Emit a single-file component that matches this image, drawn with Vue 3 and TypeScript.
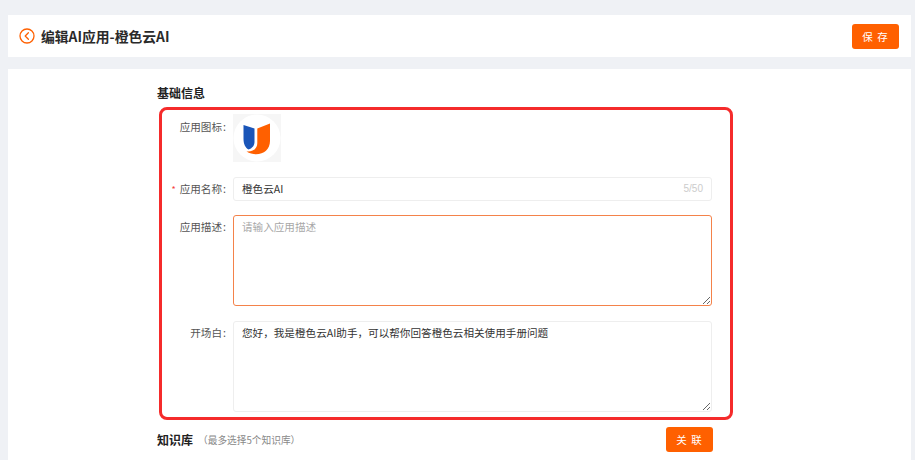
<script setup lang="ts">
const intro = '您好，我是橙色云AI助手，可以帮你回答橙色云相关使用手册问题'
</script>

<template>
  <div class="page">
    <header class="header">
      <div class="head-left">
        <svg class="back" width="16" height="16" viewBox="0 0 16 16" fill="none">
          <circle cx="8" cy="8" r="7" stroke="#ff6000" stroke-width="1.3" />
          <path d="M9.4 4.8 6.2 8l3.2 3.2" stroke="#ff6000" stroke-width="1.3" stroke-linecap="round" stroke-linejoin="round" />
        </svg>
        <h1 class="title">编辑AI应用-橙色云AI</h1>
      </div>
      <button class="btn" type="button">保 存</button>
    </header>

    <main class="content">
      <h2 class="section">基础信息</h2>
      <div class="form">
        <div class="row row-icon">
          <label class="label">应用图标<span class="colon">:</span></label>
          <div class="app-icon">
            <svg width="48" height="48" viewBox="0 0 48 48">
              <circle cx="24" cy="24" r="23.5" fill="#fff" />
              <path d="M10.500 11 21.500 14.500V28C21.500 31.500 19 34.500 15.500 35.500 12 33.500 10.500 29.500 10.500 25Z" fill="#1a55b8" />
              <path d="M24.300 14.500 37 9.500V27C37 35 31 40.300 23 40.300 19.800 40.300 16.500 39.300 13.500 37.500 19.500 38 24.300 35 24.300 29Z" fill="#ff6000" />
            </svg>
          </div>
        </div>

        <div class="row row-name">
          <label class="label"><span class="req">*</span>应用名称<span class="colon">:</span></label>
          <div class="field input">
            <span>橙色云AI</span>
            <span class="count">5/50</span>
          </div>
        </div>

        <div class="row row-desc">
          <label class="label">应用描述<span class="colon">:</span></label>
          <textarea class="field area area-focus" placeholder="请输入应用描述"></textarea>
        </div>

        <div class="row">
          <label class="label">开场白<span class="colon">:</span></label>
          <textarea class="field area" :value="intro"></textarea>
        </div>
      </div>

      <div class="kb">
        <div class="kb-text">
          <h2 class="section">知识库</h2>
          <span class="note">（最多选择5个知识库）</span>
        </div>
        <button class="btn" type="button">关 联</button>
      </div>

      <div class="highlight"></div>
    </main>
  </div>
</template>

<style>
html, body {
  margin: 0;
  background: #eff1f5;
}
</style>

<style scoped>
.page {
  width: 915px;
  height: 460px;
  overflow: hidden;
  box-sizing: border-box;
  padding: 15px 4px 0 8px;
  background: #eff1f5;
  font-family: "Noto Sans CJK SC", "Liberation Sans", sans-serif;
  color: #222;
}
.header {
  height: 42px;
  display: flex;
  align-items: center;
  justify-content: space-between;
  background: #fff;
  padding: 0 12px 0 11px;
}
.head-left {
  display: flex;
  align-items: center;
  gap: 6px;
}
.back { display: block; margin-top: -1px; }
.title {
  margin: 0;
  font-size: 13.8px;
  font-weight: 600;
  color: #2a2a2a;
  font-family: "Noto Sans CJK SC", sans-serif;
  line-height: 20px;
}
.btn {
  width: 47px;
  height: 25px;
  padding: 0;
  border: 0;
  border-radius: 3px;
  background: #ff6000;
  color: #fff;
  font: 400 10.5px "Noto Sans CJK SC", sans-serif;
  letter-spacing: 1px;
}
.content {
  position: relative;
  margin-top: 12px;
  height: 391px;
  background: #fff;
  padding: 15px 0 0 149px;
  box-sizing: border-box;
}
.section {
  margin: 0;
  font-size: 12px;
  font-weight: 600;
  line-height: 18px;
  color: #222;
}
.form {
  width: 555px;
  margin-top: 12px;
}
.row {
  display: flex;
  align-items: flex-start;
}
.row-icon { height: 48px; margin-bottom: 15px; }
.row-name { height: 24px; margin-bottom: 14px; }
.row-desc { margin-bottom: 15px; }
.label {
  width: 69px;
  flex: none;
  margin-right: 7px;
  text-align: right;
  font-size: 10.6px;
  line-height: 24px;
  color: #555;
  white-space: nowrap;
}
.row-icon .label { line-height: 26px; }
.colon { margin-left: 1px; }
.req {
  color: #f5413a;
  font-size: 9px;
  margin-right: 4px;
}
.app-icon {
  width: 48px;
  height: 48px;
  background: #f6f6f6;
}
.app-icon svg { display: block; }
.field {
  box-sizing: border-box;
  width: 479px;
  border: 1px solid #eeeeee;
  border-radius: 3px;
  background: #fff;
  font: 400 10.6px/16px "Noto Sans CJK SC", sans-serif;
  color: #333;
}
.input {
  height: 24px;
  display: flex;
  align-items: center;
  justify-content: space-between;
  padding: 0 8px;
}
.count {
  font-size: 10px;
  color: #cccccc;
  font-family: "Liberation Sans", sans-serif;
}
.area {
  display: block;
  height: 91px;
  padding: 3px 8px;
  margin: 0;
  outline: none;
  resize: vertical;
}
.area::placeholder { color: #a8a8a8; }
.area-focus { border-color: #f4824a; }
.kb {
  width: 556px;
  display: flex;
  align-items: center;
  justify-content: space-between;
  margin-top: 15px;
}
.kb-text {
  display: flex;
  align-items: center;
  gap: 5px;
}
.note {
  font-size: 9.7px;
  color: #888;
  line-height: 18px;
}
.highlight {
  position: absolute;
  left: 151px;
  top: 38px;
  width: 574px;
  height: 313px;
  box-sizing: border-box;
  border: 3px solid #f52b2b;
  border-radius: 8px;
  pointer-events: none;
}
</style>
